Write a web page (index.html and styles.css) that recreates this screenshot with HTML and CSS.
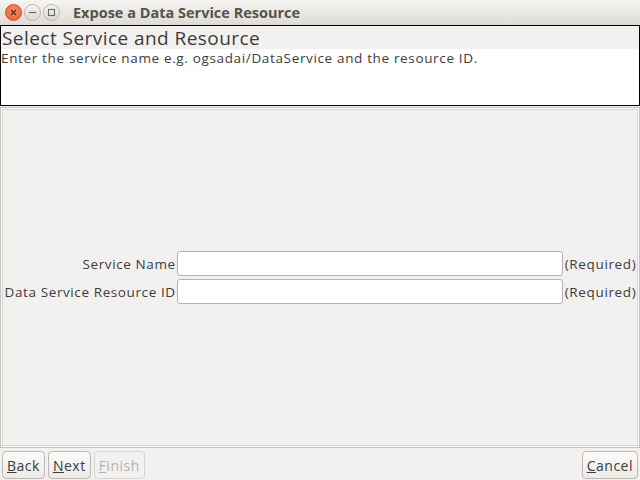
FILE: index.html
```html
<!DOCTYPE html>
<html>
<head>
<meta charset="utf-8">
<link rel="stylesheet" href="styles.css">
</head>
<body>
<div class="window">
  <div class="titlebar">
    <div class="controls">
      <span class="wbtn close"><svg width="17" height="17" viewBox="0 0 17 17"><path d="M6 6l5 5M11 6l-5 5" stroke="#5a2a18" stroke-width="1.3" fill="none"/></svg></span>
      <span class="wbtn"><svg width="17" height="17" viewBox="0 0 17 17"><path d="M5 8.5h7" stroke="#6b6760" stroke-width="1.2" fill="none"/></svg></span>
      <span class="wbtn"><svg width="17" height="17" viewBox="0 0 17 17"><rect x="5.5" y="5.5" width="6" height="6" stroke="#6b6760" stroke-width="1.1" fill="none"/></svg></span>
    </div>
    <div class="wtitle">Expose a Data Service Resource</div>
  </div>
  <div class="header">
    <div class="htitle">Select Service and Resource</div>
    <div class="hdesc">Enter the service name e.g. ogsadai/DataService and the resource ID.</div>
  </div>
  <div class="content">
    <div class="form">
      <div class="lbl">Service Name</div>
      <div class="field"></div>
      <div class="req">(Required)</div>
      <div class="lbl">Data Service Resource ID</div>
      <div class="field"></div>
      <div class="req">(Required)</div>
    </div>
  </div>
  <div class="buttons">
    <button class="btn"><u>B</u>ack</button>
    <button class="btn"><u>N</u>ext</button>
    <button class="btn disabled"><u>F</u>inish</button>
    <span class="spacer"></span>
    <button class="btn"><u>C</u>ancel</button>
  </div>
</div>
</body>
</html>
```

FILE: styles.css
```css
html, body {
  margin: 0;
  padding: 0;
}
body {
  width: 640px;
  height: 480px;
  overflow: hidden;
  background: #f2f1f0;
  font-family: "Open Sans", "DejaVu Sans", sans-serif;
  font-size: 13.5px;
  letter-spacing: 0.65px;
  color: #3c3c3c;
}
.window {
  display: flex;
  flex-direction: column;
  height: 480px;
}
.titlebar {
  height: 25px;
  flex: none;
  display: flex;
  align-items: center;
  background: linear-gradient(#f6f5f3, #dedbd6);
  box-sizing: border-box;
}
.controls {
  display: flex;
  gap: 2px;
  padding-left: 5px;
  width: 73px;
  box-sizing: border-box;
}
.wbtn {
  width: 17px;
  height: 17px;
  border-radius: 50%;
  box-sizing: border-box;
  border: 1px solid #b9b5ae;
  background: linear-gradient(#f5f4f2, #dcd9d4);
  display: flex;
}
.wbtn svg { margin: -1px; }
.wbtn.close {
  border-color: #c8572c;
  background: radial-gradient(circle at 50% 40%, #f8926a, #e9582c);
}
.wtitle {
  font-weight: bold;
  font-size: 14.5px;
  color: #56524c;
  letter-spacing: 0;
}
.header {
  height: 81px;
  flex: none;
  border: 1px solid #000;
  box-sizing: border-box;
  background: #fff;
}
.htitle {
  background: #f2f1f0;
  height: 23px;
  font-size: 19px;
  letter-spacing: 0.45px;
  line-height: 24px;
  color: #3c3c3c;
  padding-left: 1px;
}
.hdesc {
  line-height: 18px;
  color: #3c3c3c;
}
.content {
  flex: none;
  height: 341px;
  margin-top: 1px;
  box-sizing: border-box;
  border: 1px solid #c4c2bd;
  box-shadow: inset 0 0 0 1px #fdfdfc, inset 0 0 0 2px #d6d4cf;
  display: flex;
  align-items: center;
  justify-content: center;
}
.form {
  display: grid;
  grid-template-columns: auto 387px auto;
  row-gap: 3px;
  align-items: center;
  margin-left: 1px;
}
.lbl {
  text-align: right;
  letter-spacing: 0.6px;
}
.field {
  height: 25px;
  box-sizing: border-box;
  border: 1px solid #b8b2a9;
  border-radius: 3px;
  background: #fff;
  margin-left: 1px;
}
.req {
  padding-left: 2px;
}
.buttons {
  display: flex;
  padding: 3px 2px 0 2px;
  gap: 3px;
}
.spacer { flex: 1; }
.btn {
  font-family: "Open Sans", "DejaVu Sans", sans-serif;
  font-size: 14px;
  letter-spacing: 0.5px;
  color: #3c3c3c;
  height: 28px;
  padding: 0 4px;
  border: 1px solid #bdb8b0;
  border-radius: 4px;
  background: linear-gradient(#fbfbfa, #ecebe8);
}
.btn.disabled {
  color: #b4b1ac;
  border-color: #d6d3ce;
  background: #f2f1f0;
}
```
